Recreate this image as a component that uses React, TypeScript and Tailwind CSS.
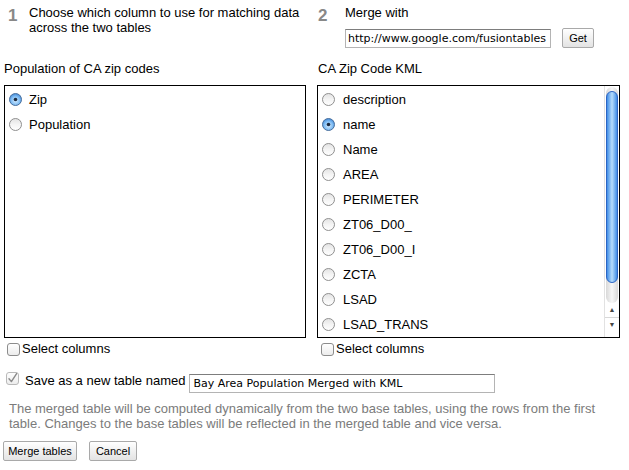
import React from 'react'

const leftFields = ['Zip', 'Population']
const rightFields = [
  'description',
  'name',
  'Name',
  'AREA',
  'PERIMETER',
  'ZT06_D00_',
  'ZT06_D00_I',
  'ZCTA',
  'LSAD',
  'LSAD_TRANS',
]

function Radio({ checked }: { checked?: boolean }) {
  return (
    <svg width="13" height="13" viewBox="0 0 13 13" className="shrink-0">
      <defs>
        <linearGradient id="rOff" x1="0" y1="0" x2="0" y2="1">
          <stop offset="0" stopColor="#e2e2e2" />
          <stop offset="0.5" stopColor="#f4f4f4" />
          <stop offset="1" stopColor="#ffffff" />
        </linearGradient>
        <radialGradient id="rOn" cx="0.5" cy="0.6" r="0.6">
          <stop offset="0" stopColor="#d6ecff" />
          <stop offset="0.6" stopColor="#7fbcf3" />
          <stop offset="1" stopColor="#3f86d6" />
        </radialGradient>
      </defs>
      {checked ? (
        <>
          <circle cx="6.5" cy="6.5" r="6" fill="url(#rOn)" stroke="#4a6f9c" strokeWidth="1" />
          <circle cx="6.5" cy="6.5" r="1.8" fill="#1b2a40" />
        </>
      ) : (
        <circle cx="6.5" cy="6.5" r="6" fill="url(#rOff)" stroke="#8f8f8f" strokeWidth="1" />
      )}
    </svg>
  )
}

function Checkbox({ checked }: { checked?: boolean }) {
  return (
    <svg width="13" height="13" viewBox="0 0 13 13" className="shrink-0">
      <defs>
        <linearGradient id="cb" x1="0" y1="0" x2="0" y2="1">
          <stop offset="0" stopColor="#ffffff" />
          <stop offset="1" stopColor="#ececec" />
        </linearGradient>
      </defs>
      <rect x="0.5" y="0.5" width="12" height="12" rx="2.5" fill="url(#cb)" stroke={checked ? '#b9b9b9' : '#8c8c8c'} />
      {checked && (
        <path d="M3 6.8 L5.4 9.6 L10.6 1.6" fill="none" stroke="#8a8a8a" strokeWidth="1.4" strokeLinecap="round" strokeLinejoin="round" />
      )}
    </svg>
  )
}

function Button({ children, className = '' }: { children: React.ReactNode; className?: string }) {
  return (
    <button
      className={`h-[20px] border border-[#a9a9a9] rounded-[2px] bg-gradient-to-b from-white to-[#e3e3e3] text-[11px] text-black leading-none ${className}`}
    >
      {children}
    </button>
  )
}

function Scrollbar() {
  return (
    <div className="w-[15px] h-full flex flex-col border-l border-[#e2e2e2] bg-white">
      <div className="flex-1 mt-[1px] mx-[1px] rounded-full bg-gradient-to-r from-[#d8d8d8] via-[#f7f7f7] to-[#d8d8d8]">
        <div className="mt-[4px] h-[192px] rounded-full border border-[#2c65c4] bg-gradient-to-r from-[#3f8de6] via-[#b6dcfb] to-[#3f8de6]" />
      </div>
      <div className="h-[15px] flex items-center justify-center border-b border-[#d8d8d8] text-[7px] text-[#444]">▲</div>
      <div className="h-[15px] flex items-center justify-center text-[7px] text-[#444]">▼</div>
      <div className="h-[4px]" />
    </div>
  )
}

export default function App() {
  return (
    <div className="w-[629px] h-[470px] bg-white text-black text-[13px] font-['Liberation_Sans',Arial,sans-serif] overflow-hidden">
      <div className="flex gap-[11px] pl-[4px] pt-[5px]">
        {/* Left column */}
        <div className="w-[302px]">
          <div className="h-[56px] flex">
            <div className="w-[25px] pl-[4px] pt-[1px] text-[17px] font-bold text-[#888888] leading-[19px]">1</div>
            <div className="leading-[15px]">
              Choose which column to use for matching data
              <br />
              across the two tables
            </div>
          </div>
          <div className="leading-[16px] mb-[8px]">Population of CA zip codes</div>
          <div className="h-[253px] border border-black pt-[1px] pl-[4px]">
            {leftFields.map((f, i) => (
              <div key={f} className="h-[25px] flex items-center gap-[7px]">
                <Radio checked={i === 0} />
                <span>{f}</span>
              </div>
            ))}
          </div>
          <div className="mt-[3px] h-[16px] flex items-center gap-[2px] pl-[3px]">
            <Checkbox />
            <span>Select columns</span>
          </div>
        </div>

        {/* Right column */}
        <div className="w-[303px]">
          <div className="h-[56px] flex">
            <div className="w-[28px] pl-[1px] pt-[1px] text-[17px] font-bold text-[#888888] leading-[19px]">2</div>
            <div>
              <div className="leading-[15px]">Merge with</div>
              <div className="mt-[8px] flex items-center">
                <input
                  readOnly
                  value="http://www.google.com/fusiontables"
                  className="w-[206px] h-[19px] px-[2px] border border-[#b4b4b4] border-t-[#7d7d7d] text-[11px] font-['DejaVu_Sans',Verdana,sans-serif] text-black outline-none"
                />
                <Button className="ml-[11px] w-[32px]">Get</Button>
              </div>
            </div>
          </div>
          <div className="leading-[16px] mb-[8px] pl-[1px]">CA Zip Code KML</div>
          <div className="h-[253px] border border-black flex overflow-hidden">
            <div className="flex-1 pt-[1px] pl-[4px] overflow-hidden">
              {rightFields.map((f, i) => (
                <div key={f} className="h-[25px] flex items-center gap-[8px]">
                  <Radio checked={i === 1} />
                  <span>{f}</span>
                </div>
              ))}
            </div>
            <Scrollbar />
          </div>
          <div className="mt-[3px] h-[16px] flex items-center gap-[2px] pl-[4px]">
            <Checkbox />
            <span>Select columns</span>
          </div>
        </div>
      </div>

      {/* Save as */}
      <div className="mt-[15px] pl-[6px] flex items-start h-[20px]">
        <Checkbox checked />
        <span className="ml-[6px] mt-[1px] leading-[15px]">Save as a new table named</span>
        <input
          readOnly
          value="Bay Area Population Merged with KML"
          className="ml-[4px] mt-[2px] w-[306px] h-[19px] px-[3px] border border-[#b4b4b4] border-t-[#7d7d7d] text-[11px] font-['DejaVu_Sans',Verdana,sans-serif] text-black outline-none"
        />
      </div>

      <p className="mt-[9px] pl-[9px] leading-[15px] text-[#7b7b7b]">
        The merged table will be computed dynamically from the two base tables, using the rows from the first
        <br />
        table. Changes to the base tables will be reflected in the merged table and vice versa.
      </p>

      <div className="mt-[10px] pl-[3px] flex gap-[12px]">
        <Button className="w-[74px]">Merge tables</Button>
        <Button className="w-[48px]">Cancel</Button>
      </div>
    </div>
  )
}
